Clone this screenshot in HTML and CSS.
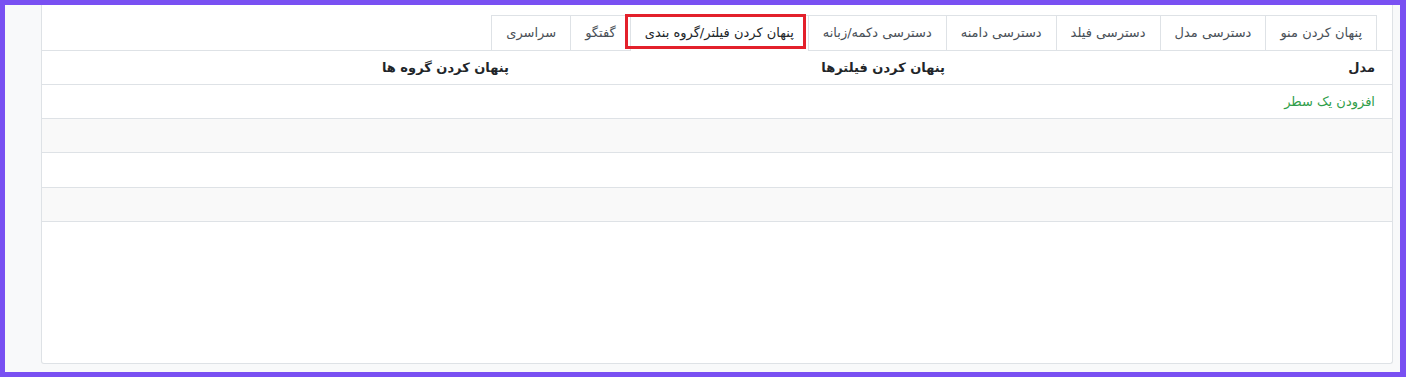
FILE: index.html
```html
<!DOCTYPE html>
<html lang="fa" dir="rtl">
<head>
  <meta charset="UTF-8" />
  <title>دسترسی‌ها</title>
  <link rel="stylesheet" href="styles.css">
</head>
<body>
  <div class="frame">
    <div class="sheet">
      <ul class="tabs">
        <li>پنهان کردن منو</li>
        <li>دسترسی مدل</li>
        <li>دسترسی فیلد</li>
        <li>دسترسی دامنه</li>
        <li>دسترسی دکمه/زبانه</li>
        <li class="active">پنهان کردن فیلتر/گروه بندی</li>
        <li>گفتگو</li>
        <li>سراسری</li>
      </ul>

      <!-- one2many list -->
      <div class="list">
        <div class="row head">
          <div class="cell">مدل</div>
          <div class="cell">پنهان کردن فیلترها</div>
          <div class="cell">پنهان کردن گروه ها</div>
          <div class="cell"></div>
        </div>
        <div class="row">
          <div class="cell"><a class="add-line">افزودن یک سطر</a></div>
          <div class="cell"></div>
          <div class="cell"></div>
          <div class="cell"></div>
        </div>
        <div class="row"></div>
        <div class="row tall"></div>
        <div class="row"></div>
      </div>
    </div>
  </div>
</body>
</html>
```

FILE: styles.css
```css
* {
  box-sizing: border-box;
}

html, body {
  margin: 0;
  height: 100%;
}

body {
  font-family: 'DejaVu Sans', sans-serif;
  font-size: 13px;
  color: #212529;
}

/* Purple frame round the screenshot */
.frame {
  height: 377px;
  border: 5px solid #7950f2;
  border-right-width: 6px;
  background: #f8f9fa;
  padding: 0 7px 8px 36px;
  overflow: hidden;
}

/* Form sheet */
.sheet {
  height: 100%;
  background: #fff;
  border: 1px solid #dee2e6;
  border-top: none;
  border-radius: 0 0 3px 3px;
  padding-top: 10px;
}

/* Notebook tabs */
.tabs {
  list-style: none;
  margin: 0;
  padding: 0 15px 0 0;
  display: flex;
  border-bottom: 1px solid #dee2e6;
}
.tabs li {
  height: 36px;
  line-height: 34px;
  padding: 0 14px;
  margin-bottom: -1px;
  margin-left: -1px;
  border: 1px solid #dee2e6;
  border-bottom: none;
  color: #495057;
  white-space: nowrap;
}
.tabs li.active {
  position: relative;
  color: #212529;
  background: #fff;
}
/* red highlight drawn over the active tab */
.tabs li.active::after {
  content: "";
  position: absolute;
  top: -2px;
  bottom: 2px;
  left: -6px;
  right: 2px;
  border: 3px solid #e3202b;
}

/* List */
.row {
  display: grid;
  grid-template-columns: 430px 436px 436px 1fr;
  height: 34px;
  border-bottom: 1px solid #dee2e6;
}
.row.tall {
  height: 35px;
}
.row:nth-child(odd) {
  background: #f9f9f9;
}
.row.head,
.row:nth-child(2) {
  background: #fff;
}
.cell {
  padding: 0 17px 0 8px;
  line-height: 33px;
  white-space: nowrap;
}
.head .cell {
  font-weight: bold;
  color: #212529;
}
.add-line {
  color: #2f9e4a;
  cursor: pointer;
}
```
